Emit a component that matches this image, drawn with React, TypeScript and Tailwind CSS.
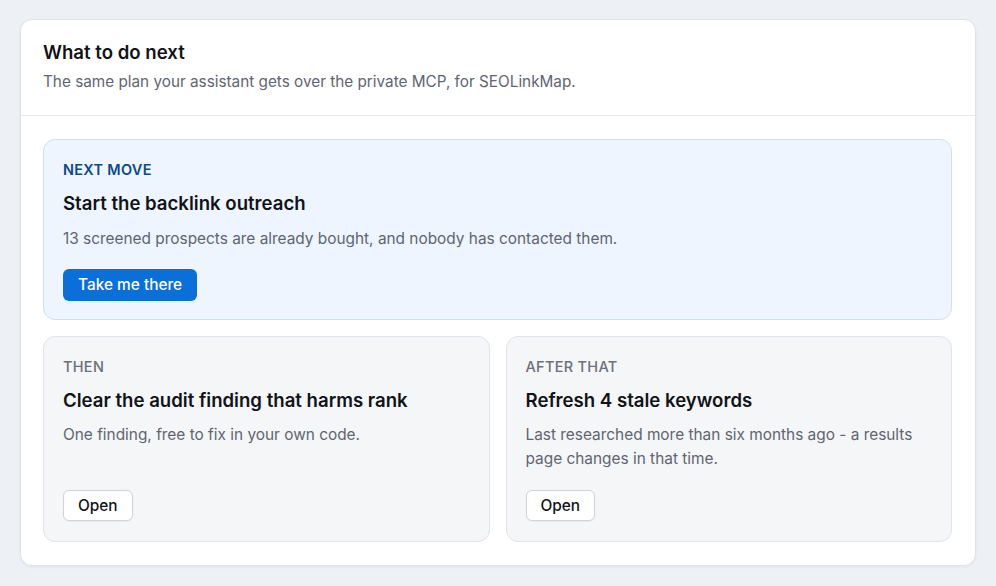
/** "What to do next" plan card — next move plus two follow-ups. */

type Step = {
  label: string;
  title: string;
  body: string;
};

const followUps: Step[] = [
  {
    label: "Then",
    title: "Clear the audit finding that harms rank",
    body: "One finding, free to fix in your own code.",
  },
  {
    label: "After that",
    title: "Refresh 4 stale keywords",
    body: "Last researched more than six months ago - a results page changes in that time.",
  },
];

function FollowUpCard({ step }: { step: Step }) {
  return (
    <div className="flex flex-col rounded-xl border border-[#e1e4ea] bg-[#f5f6f8] px-[19px] pt-5 pb-5">
      <p className="text-[14.5px] leading-5 font-medium uppercase tracking-[0.02em] text-[#6b7079]">
        {step.label}
      </p>
      <h3 className="mt-[9px] text-[18.6px] leading-7 font-semibold text-[#111318]">
        {step.title}
      </h3>
      <p className="mt-[9px] text-[15.4px] leading-6 text-[#5f6571]">{step.body}</p>
      <div className="mt-auto pt-[19px]">
        <button className="h-[31px] rounded-md border border-[#cfd3da] bg-white px-[14px] text-[15.4px] font-medium text-[#111318] shadow-[0_1px_1px_rgba(0,0,0,0.04)]">
          Open
        </button>
      </div>
    </div>
  );
}

export default function App() {
  return (
    <div
      className="min-h-screen bg-[#edf0f5] px-5 pt-[19px] pb-[21px]"
      style={{ fontFamily: "Inter, 'Noto Sans', sans-serif" }}
    >
      <section className="rounded-xl border border-[#dfe3e9] bg-white shadow-[0_1px_3px_rgba(15,23,42,0.06)]">
        <header className="border-b border-[#e6e8ec] px-[22px] pt-[18px] pb-[21px]">
          <h2 className="text-[18.6px] leading-7 font-semibold text-[#111318]">What to do next</h2>
          <p className="mt-1 text-[15.3px] leading-6 text-[#5f6571]">
            The same plan your assistant gets over the private MCP, for SEOLinkMap.
          </p>
        </header>

        <div className="flex flex-col gap-4 pt-[23px] pr-[23px] pb-[23px] pl-[22px]">
          <div className="rounded-xl border border-[#d4e0f0] bg-[#eef5fe] px-[19px] pt-5 pb-[18px]">
            <p className="text-[14.5px] leading-5 font-semibold uppercase tracking-[0.02em] text-[#0d4a8a]">
              Next move
            </p>
            <h3 className="mt-[9px] text-[18.6px] leading-7 font-semibold text-[#111318]">
              Start the backlink outreach
            </h3>
            <p className="mt-[10px] text-[15.4px] leading-6 text-[#5f6571]">
              13 screened prospects are already bought, and nobody has contacted them.
            </p>
            <button className="mt-[18px] h-8 rounded-md bg-[#0a6fd8] px-[15px] text-[15.4px] font-medium text-white">
              Take me there
            </button>
          </div>

          <div className="grid grid-cols-2 gap-4">
            {followUps.map((step) => (
              <FollowUpCard key={step.label} step={step} />
            ))}
          </div>
        </div>
      </section>
    </div>
  );
}
